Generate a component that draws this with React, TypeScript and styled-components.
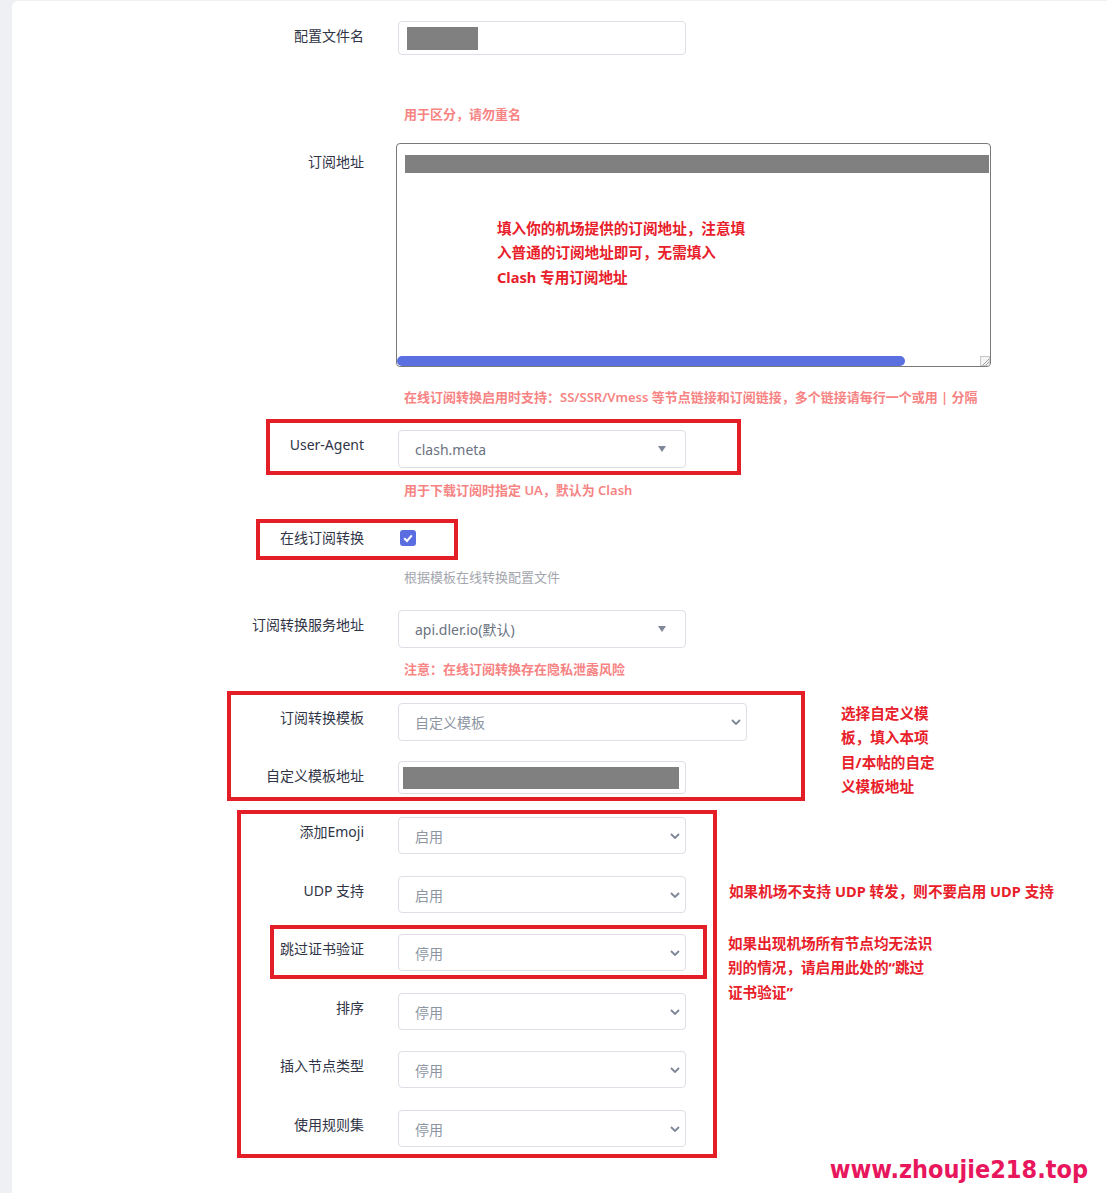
import React from "react";
import styled, { createGlobalStyle } from "styled-components";

const GlobalStyle = createGlobalStyle`
  html, body {
    margin: 0;
    padding: 0;
    background: #eef0f3;
  }
  body {
    font-family: "Noto Sans", "Noto Sans CJK SC", sans-serif;
    color: #303446;
  }
`;

const Page = styled.div`
  width: 1107px;
  min-height: 1193px;
  padding: 1px 0 0 12px;
  box-sizing: border-box;
  background: #eef0f3;
`;

const Card = styled.div`
  min-height: 1192px;
  padding-top: 20px;
  box-sizing: border-box;
  background: #fff;
  border-top-left-radius: 6px;
`;

const Row = styled.div<{ $mt?: number; $center?: boolean }>`
  position: relative;
  display: flex;
  align-items: ${(p) => (p.$center ? "center" : "flex-start")};
  margin-top: ${(p) => p.$mt ?? 0}px;
`;

const Label = styled.label<{ $pt?: number }>`
  flex: none;
  width: 386px;
  padding: ${(p) => p.$pt ?? 0}px 34px 0 0;
  box-sizing: border-box;
  text-align: right;
  font-size: 14px;
  line-height: 30px;
  color: #303446;
`;

const Help = styled.div<{ $tone: "red" | "gray"; $mt: number }>`
  margin: ${(p) => p.$mt}px 0 0 392px;
  font-size: 13px;
  line-height: 18px;
  font-weight: ${(p) => (p.$tone === "red" ? 600 : 400)};
  color: ${(p) => (p.$tone === "red" ? "#f78383" : "#a3a6ad")};
  white-space: nowrap;
`;

const Field = styled.div<{ $h: number; $pad: number }>`
  width: 288px;
  height: ${(p) => p.$h}px;
  display: flex;
  align-items: center;
  padding-left: ${(p) => p.$pad}px;
  border: 1px solid #dcdfe6;
  border-radius: 4px;
  box-sizing: border-box;
`;

const Redacted = styled.div<{ $w: number; $h: number }>`
  width: ${(p) => p.$w}px;
  height: ${(p) => p.$h}px;
  background: #808080;
`;

const Select = styled.div<{ $w?: number; $h?: number; $pr?: number }>`
  width: ${(p) => p.$w ?? 288}px;
  height: ${(p) => p.$h ?? 37}px;
  display: flex;
  align-items: center;
  justify-content: space-between;
  padding: 0 ${(p) => p.$pr ?? 5}px 0 16px;
  border: 1px solid #dcdfe6;
  border-radius: 4px;
  box-sizing: border-box;
  background: #fff;
`;

const Value = styled.span<{ $dark?: boolean }>`
  font-size: 14px;
  color: ${(p) => (p.$dark ? "#6b7281" : "#8d95a3")};
`;

const TextBox = styled.div`
  position: relative;
  width: 595px;
  height: 224px;
  margin-left: -2px;
  display: flex;
  flex-direction: column;
  padding: 11px 0 0 8px;
  border: 1px solid #7a7a7a;
  border-radius: 4px;
  box-sizing: border-box;
  overflow: hidden;
`;

const UrlBar = styled.div`
  width: 584px;
  height: 18px;
  background: #808080;
`;

const ScrollRow = styled.div`
  margin: auto 0 0 -8px;
  display: flex;
  align-items: flex-end;
  justify-content: space-between;
`;

const Thumb = styled.div`
  width: 508px;
  height: 10px;
  border-radius: 5px;
  background: #5b70e0;
`;

const Callout = styled.div<{ $w: number; $mt?: number; $ml?: number }>`
  width: ${(p) => p.$w}px;
  margin: ${(p) => p.$mt ?? 0}px 0 0 ${(p) => p.$ml ?? 0}px;
  font-size: 14.6px;
  line-height: 24.4px;
  font-weight: 700;
  color: #e8202a;
`;

const InsideCallout = styled(Callout)`
  position: absolute;
  left: 100px;
  top: 72px;
  margin: 0;
`;

const SideCallout = styled(Callout)`
  flex: none;
  height: 24px;
`;

const Frame = styled.div<{ $l: number; $t: number; $w: number; $h: number }>`
  position: absolute;
  left: ${(p) => p.$l}px;
  top: ${(p) => p.$t}px;
  width: ${(p) => p.$w}px;
  height: ${(p) => p.$h}px;
  border: 4px solid #e41e27;
  box-sizing: border-box;
  pointer-events: none;
`;

const Group = styled.div<{ $mt: number }>`
  position: relative;
  display: flex;
  align-items: flex-start;
  margin-top: ${(p) => p.$mt}px;
`;

const Rows = styled.div`
  display: flex;
  flex-direction: column;
`;

const CheckWrap = styled.span`
  display: flex;
  margin-left: 2px;
`;

const Footer = styled.div`
  display: flex;
  justify-content: flex-end;
  margin-top: 9px;
  padding-right: 19px;
`;

const Watermark = styled.div`
  font-family: "DejaVu Sans", sans-serif;
  font-stretch: condensed;
  font-weight: 700;
  font-size: 25px;
  line-height: 28px;
  color: #e8175d;
`;

const Chevron = () => (
  <svg width="10" height="6" viewBox="0 0 10 6">
    <polyline points="1,1 5,5 9,1" fill="none" stroke="#7d8696" strokeWidth="1.8" />
  </svg>
);

const Caret = () => (
  <svg width="8" height="6" viewBox="0 0 8 6">
    <polygon points="0,0 8,0 4,6" fill="#7e8898" />
  </svg>
);

const Grip = () => (
  <svg width="10" height="10" viewBox="0 0 10 10">
    <rect x="0.5" y="0.5" width="9" height="9" fill="#f3f3f3" stroke="#c8c8c8" />
    <line x1="3" y1="9" x2="9" y2="3" stroke="#888" strokeWidth="0.8" />
    <line x1="6" y1="9" x2="9" y2="6" stroke="#888" strokeWidth="0.8" />
  </svg>
);

const CheckBox = () => (
  <svg width="16" height="16" viewBox="0 0 16 16">
    <rect width="16" height="16" rx="3" fill="#5b6ee1" />
    <polyline points="4.2,8.3 7,11 11.8,5.4" fill="none" stroke="#fff" strokeWidth="2" />
  </svg>
);

const switches = [
  { label: "添加Emoji", value: "启用", mt: 0 },
  { label: "UDP 支持", value: "启用", mt: 22 },
  { label: "跳过证书验证", value: "停用", mt: 21 },
  { label: "排序", value: "停用", mt: 22 },
  { label: "插入节点类型", value: "停用", mt: 21 },
  { label: "使用规则集", value: "停用", mt: 22 },
];

export default function App() {
  return (
    <Page>
      <GlobalStyle />
      <Card>
        <Row>
          <Label>配置文件名</Label>
          <Field $h={34} $pad={8}>
            <Redacted $w={71} $h={23} />
          </Field>
        </Row>
        <Help $tone="red" $mt={50}>用于区分，请勿重名</Help>

        <Row $mt={20}>
          <Label $pt={4}>订阅地址</Label>
          <TextBox>
            <UrlBar />
            <InsideCallout $w={256}>
              填入你的机场提供的订阅地址，注意填入普通的订阅地址即可，无需填入 Clash 专用订阅地址
            </InsideCallout>
            <ScrollRow>
              <Thumb />
              <Grip />
            </ScrollRow>
          </TextBox>
        </Row>
        <Help $tone="red" $mt={21}>
          在线订阅转换启用时支持：SS/SSR/Vmess 等节点链接和订阅链接，多个链接请每行一个或用 | 分隔
        </Help>

        <Row $mt={24}>
          <Label>User-Agent</Label>
          <Select $h={38} $pr={19}>
            <Value $dark>clash.meta</Value>
            <Caret />
          </Select>
          <Frame $l={254} $t={-11} $w={475} $h={56} />
        </Row>
        <Help $tone="red" $mt={13}>用于下载订阅时指定 UA，默认为 Clash</Help>

        <Row $mt={24} $center>
          <Label>在线订阅转换</Label>
          <CheckWrap>
            <CheckBox />
          </CheckWrap>
          <Frame $l={244} $t={-4} $w={202} $h={41} />
        </Row>
        <Help $tone="gray" $mt={15}>根据模板在线转换配置文件</Help>

        <Row $mt={24}>
          <Label>订阅转换服务地址</Label>
          <Select $h={38} $pr={19}>
            <Value $dark>api.dler.io(默认)</Value>
            <Caret />
          </Select>
        </Row>
        <Help $tone="red" $mt={12}>注意：在线订阅转换存在隐私泄露风险</Help>

        <Group $mt={25}>
          <Rows>
            <Row>
              <Label>订阅转换模板</Label>
              <Select $w={349} $h={38}>
                <Value>自定义模板</Value>
                <Chevron />
              </Select>
            </Row>
            <Row $mt={20}>
              <Label>自定义模板地址</Label>
              <Field $h={33} $pad={4}>
                <Redacted $w={276} $h={22} />
              </Field>
            </Row>
          </Rows>
          <SideCallout $w={98} $mt={-2} $ml={94}>
            选择自定义模板，填入本项目/本帖的自定义模板地址
          </SideCallout>
          <Frame $l={215} $t={-12} $w={578} $h={110} />
        </Group>

        <Group $mt={23}>
          <Rows>
            {switches.map((s) => (
              <Row key={s.label} $mt={s.mt}>
                <Label>{s.label}</Label>
                <Select>
                  <Value>{s.value}</Value>
                  <Chevron />
                </Select>
                {s.label === "UDP 支持" && (
                  <SideCallout $w={360} $mt={3} $ml={43}>
                    如果机场不支持 UDP 转发，则不要启用 UDP 支持
                  </SideCallout>
                )}
                {s.label === "跳过证书验证" && (
                  <>
                    <SideCallout $w={208} $mt={-3} $ml={42}>
                      如果出现机场所有节点均无法识别的情况，请启用此处的“跳过证书验证”
                    </SideCallout>
                    <Frame $l={258} $t={-9} $w={437} $h={54} />
                  </>
                )}
              </Row>
            ))}
          </Rows>
          <Frame $l={225} $t={-7} $w={480} $h={348} />
        </Group>

        <Footer>
          <Watermark>www.zhoujie218.top</Watermark>
        </Footer>
      </Card>
    </Page>
  );
}
